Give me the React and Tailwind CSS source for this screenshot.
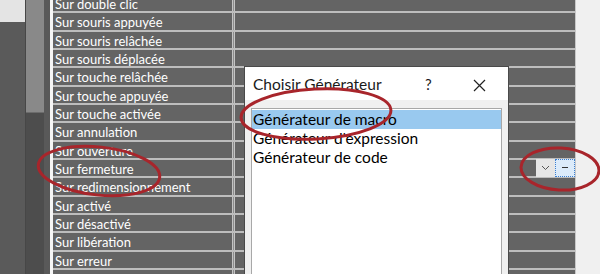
import React from "react";

const rows = [
  "Sur double clic",
  "Sur souris appuyée",
  "Sur souris relâchée",
  "Sur souris déplacée",
  "Sur touche relâchée",
  "Sur touche appuyée",
  "Sur touche activée",
  "Sur annulation",
  "Sur ouverture",
  "Sur fermeture",
  "Sur redimensionnement",
  "Sur activé",
  "Sur désactivé",
  "Sur libération",
  "Sur erreur",
  "",
];

function Row({ label }) {
  const withButtons = label === "Sur fermeture";
  return (
    <div className="flex h-[18.333px] shrink-0 border-b-2 border-[#bdbdbd] bg-[#646464]">
      <div className="w-[179px] pl-[2px] pt-[1px] text-white text-[13px] leading-[16px] whitespace-nowrap">
        {label}
      </div>
      <div className="w-[3px] border-x border-[#c4c4c4] bg-[#8d8d8d]" />
      <div className="flex-1 flex justify-end">
        {withButtons && (
          <div className="flex h-[18px] -mt-px">
            <div className="w-[19px] h-full bg-[#e6e6e6] flex items-center justify-center">
              <svg width="9" height="6" viewBox="0 0 9 6">
                <path d="M1 1 L4.5 4.5 L8 1" fill="none" stroke="#555" strokeWidth="1" />
              </svg>
            </div>
            <div className="w-[20px] h-full bg-[#dcebfa] border border-dotted border-[#3c7fd0] flex items-center justify-center">
              <div className="w-[6px] h-px bg-[#333]" />
            </div>
          </div>
        )}
      </div>
    </div>
  );
}

export default function App() {
  return (
    <div
      className="relative w-[600px] h-[274px] overflow-hidden flex bg-[#f0f0f0]"
      style={{ fontFamily: "Lato, 'Noto Sans', sans-serif" }}
    >
      {/* left panel */}
      <div className="flex w-[50px] h-full shrink-0">
        <div className="w-[25px] flex flex-col">
          <div className="h-[22px] bg-[#e4e4e4]" />
          <div className="flex-1 bg-[#5a5a5a]" />
        </div>
        <div className="w-px bg-[#474747]" />
        <div className="w-[18px] flex flex-col bg-[#4d4d4d]">
          <div className="h-[113px] bg-[#898989] border-b border-[#6c6c6c]" />
        </div>
        <div className="w-[6px] bg-[#595959]" />
      </div>
      <div className="w-[3px] bg-[#f5f5f5] shrink-0" />
      {/* grid */}
      <div className="w-[523px] shrink-0 flex flex-col -mt-[5px] border-r border-[#c8c8c8]">
        {rows.map((r, i) => (
          <Row key={i} label={r} />
        ))}
      </div>

      {/* dialog */}
      <div className="absolute left-[244px] top-[66px] w-[265px] h-[220px] border border-[#4a4a4a] bg-[#f0f0f0] flex flex-col">
        <div className="h-[33px] bg-white flex items-center pl-[8px] text-[#1a1a1a]">
          <span className="w-[172px] text-[15.5px] pt-[2px] whitespace-nowrap">Choisir Générateur</span>
          <span className="w-[8px] text-[15px] pt-[2px]">?</span>
          <span className="ml-[40px] pt-[3px]">
            <svg width="13" height="13" viewBox="0 0 13 13">
              <path d="M1 1 L12 12 M12 1 L1 12" stroke="#222" strokeWidth="1.2" fill="none" />
            </svg>
          </span>
        </div>
        <div className="flex-1 px-[6px] pt-[8px]">
          <div className="h-full border border-[#a8a8a8] bg-white pt-px text-[15.5px] text-black">
            <div className="h-[19px] bg-[#99c9ef] pl-px leading-[19px]">Générateur de macro</div>
            <div className="h-[18.5px] pl-px leading-[18.5px]">Générateur d'expression</div>
            <div className="h-[18.5px] pl-px leading-[18.5px]">Générateur de code</div>
          </div>
        </div>
      </div>

      {/* annotations */}
      <svg className="absolute inset-0 pointer-events-none" width="600" height="274" viewBox="0 0 600 274">
        <ellipse cx="99" cy="171" rx="61" ry="24" transform="rotate(6 99 171)" fill="none" stroke="#a8252b" strokeWidth="3" />
        <ellipse cx="316" cy="114" rx="75" ry="25" transform="rotate(-3 316 114)" fill="none" stroke="#a8252b" strokeWidth="3" />
        <ellipse cx="560" cy="169" rx="39" ry="21" transform="rotate(3 560 169)" fill="none" stroke="#a8252b" strokeWidth="3" />
      </svg>
    </div>
  );
}
